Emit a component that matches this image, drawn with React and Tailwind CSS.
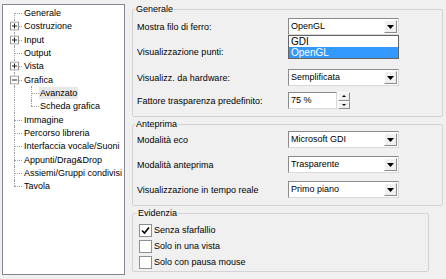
import React from 'react';

const treeItems = [
  { label: 'Generale', first: true },
  { label: 'Costruzione', exp: '+' },
  { label: 'Input', exp: '+' },
  { label: 'Output' },
  { label: 'Vista', exp: '+' },
  { label: 'Grafica', exp: '-' },
  { label: 'Avanzato', child: true, selected: true },
  { label: 'Scheda grafica', child: true, lastChild: true },
  { label: 'Immagine' },
  { label: 'Percorso libreria' },
  { label: 'Interfaccia vocale/Suoni' },
  { label: 'Appunti/Drag&Drop' },
  { label: 'Assiemi/Gruppi condivisi' },
  { label: 'Tavola', last: true },
];

// small +/- box of the tree view
const ExpandBox = ({ sign }) => (
  <svg width="9" height="9" viewBox="0 0 9 9" className="absolute left-[7px] top-1/2 -translate-y-1/2">
    <rect x="0.5" y="0.5" width="8" height="8" fill="#fff" stroke="#919191" />
    <line x1="2" y1="4.5" x2="7" y2="4.5" stroke="#222" />
    {sign === '+' && <line x1="4.5" y1="2" x2="4.5" y2="7" stroke="#222" />}
  </svg>
);

const TreeRow = ({ item }) => {
  const vClass = item.first
    ? 'top-1/2 bottom-0'
    : item.last
    ? 'top-0 h-1/2'
    : 'top-0 bottom-0';
  return (
    <div className="relative flex items-center h-[13.33px]">
      <div className={`relative h-full shrink-0 ${item.child ? 'w-[36px]' : 'w-[20px]'}`}>
        <div className={`absolute left-[11px] border-l border-dotted border-[#a0a0a0] ${vClass}`} />
        {item.child ? (
          <>
            <div className={`absolute left-[28px] border-l border-dotted border-[#a0a0a0] top-0 ${item.lastChild ? 'h-1/2' : 'bottom-0'}`} />
            <div className="absolute left-[28px] top-1/2 w-[8px] border-t border-dotted border-[#a0a0a0]" />
          </>
        ) : (
          <div className="absolute left-[11px] top-1/2 w-[8px] border-t border-dotted border-[#a0a0a0]" />
        )}
        {item.exp && <ExpandBox sign={item.exp} />}
      </div>
      <span className={`whitespace-nowrap px-[1px] leading-[12px] ${item.selected ? 'bg-[#e8e8e8]' : ''}`}>
        {item.label}
      </span>
    </div>
  );
};

const Arrow = () => (
  <svg width="7" height="4" viewBox="0 0 7 4">
    <path d="M0 0h7L3.5 4z" fill="#000" />
  </svg>
);

const Combo = ({ value, children }) => (
  <div className="relative w-[111px] h-[17px] bg-white border border-t-[#8a8a8a] border-l-[#8a8a8a] border-b-[#dadada] border-r-[#dadada] flex items-center">
    <span className="pl-[2px] flex-1 whitespace-nowrap">{value}</span>
    <div className="w-[13px] h-[13px] mr-[1px] bg-[#f0f0f0] border border-t-white border-l-white border-b-[#8a8a8a] border-r-[#8a8a8a] flex items-center justify-center">
      <Arrow />
    </div>
    {children}
  </div>
);

const Row = ({ label, className = '', children }) => (
  <div className={`flex items-center h-[17px] ${className}`}>
    <span className="w-[151px] shrink-0 whitespace-nowrap pt-[2px]">{label}</span>
    {children}
  </div>
);

const Group = ({ title, className = '', children }) => (
  <fieldset className={`border border-[#d3d3d3] rounded-[2px] ${className}`}>
    <legend className="-ml-[2px] px-[1px] leading-[12px]">{title}</legend>
    {children}
  </fieldset>
);

const Check = ({ checked, label }) => (
  <div className="flex items-center h-[16px]">
    <div className="w-[13px] h-[13px] bg-white border border-[#8e8f8f] flex items-center justify-center">
      {checked && (
        <svg width="9" height="9" viewBox="0 0 9 9">
          <path d="M1 4.5l2.5 2.5L8 1.5" fill="none" stroke="#000" strokeWidth="1.6" />
        </svg>
      )}
    </div>
    <span className="ml-[2px] whitespace-nowrap">{label}</span>
  </div>
);

export default function App() {
  return (
    <div className="w-[446px] h-[279px] bg-[#f0f0f0] flex overflow-hidden text-[9px] leading-none text-black font-['Liberation_Sans',Arial,sans-serif]">
      {/* tree of categories */}
      <div className="ml-[2px] mt-[4px] w-[123px] h-[271px] shrink-0 bg-white border border-[#828790] pt-[1.5px]">
        {treeItems.map((item) => (
          <TreeRow key={item.label} item={item} />
        ))}
      </div>

      {/* settings */}
      <div className="ml-[7px] w-[311px] shrink-0">
        <Group title="Generale" className="mt-[3px] pl-[4px] pt-[3px] pb-[7px]">
          <Row label="Mostra filo di ferro:">
            <Combo value="OpenGL">
              <div className="absolute left-[-1px] top-[16px] w-[111px] bg-white border border-[#646464] z-10">
                <div className="h-[11px] leading-[11px] pl-[2px] text-[10px]">GDI</div>
                <div className="h-[11px] leading-[11px] pl-[2px] text-[10px] bg-[#3399ff] text-white">OpenGL</div>
              </div>
            </Combo>
          </Row>
          <Row label="Visualizzazione punti:" className="mt-[8px]">
            <div className="w-[111px] h-[17px]" />
          </Row>
          <Row label="Visualizz. da hardware:" className="mt-[9px]">
            <Combo value="Semplificata" />
          </Row>
          <Row label="Fattore trasparenza predefinito:" className="mt-[6px]">
            <div className="w-[49px] h-[17px] bg-white border border-t-[#8a8a8a] border-l-[#8a8a8a] border-b-[#dadada] border-r-[#dadada] flex items-center pl-[2px]">
              75 %
            </div>
            <div className="ml-[1px] w-[12px] h-[17px] flex flex-col">
              <div className="flex-1 bg-[#f0f0f0] border border-t-white border-l-white border-b-[#8a8a8a] border-r-[#8a8a8a] flex items-center justify-center">
                <div className="w-0 h-0 border-x-[2px] border-x-transparent border-b-[2px] border-b-black" />
              </div>
              <div className="flex-1 bg-[#f0f0f0] border border-t-white border-l-white border-b-[#8a8a8a] border-r-[#8a8a8a] flex items-center justify-center">
                <div className="w-0 h-0 border-x-[2px] border-x-transparent border-t-[2px] border-t-black" />
              </div>
            </div>
          </Row>
        </Group>

        <Group title="Anteprima" className="mt-[1px] pl-[4px] pt-[1px] pb-[7px]">
          <Row label="Modalità eco">
            <Combo value="Microsoft GDI" />
          </Row>
          <Row label="Modalità anteprima" className="mt-[8px]">
            <Combo value="Trasparente" />
          </Row>
          <Row label="Visualizzazione in tempo reale" className="mt-[8px]">
            <Combo value="Primo piano" />
          </Row>
        </Group>

        <Group title="Evidenzia" className="mt-[1px] w-[297px] pl-[6px] pt-[3px] pb-[1px]">
          <Check checked label="Senza sfarfallio" />
          <Check label="Solo in una vista" />
          <Check label="Solo con pausa mouse" />
        </Group>
      </div>
    </div>
  );
}
